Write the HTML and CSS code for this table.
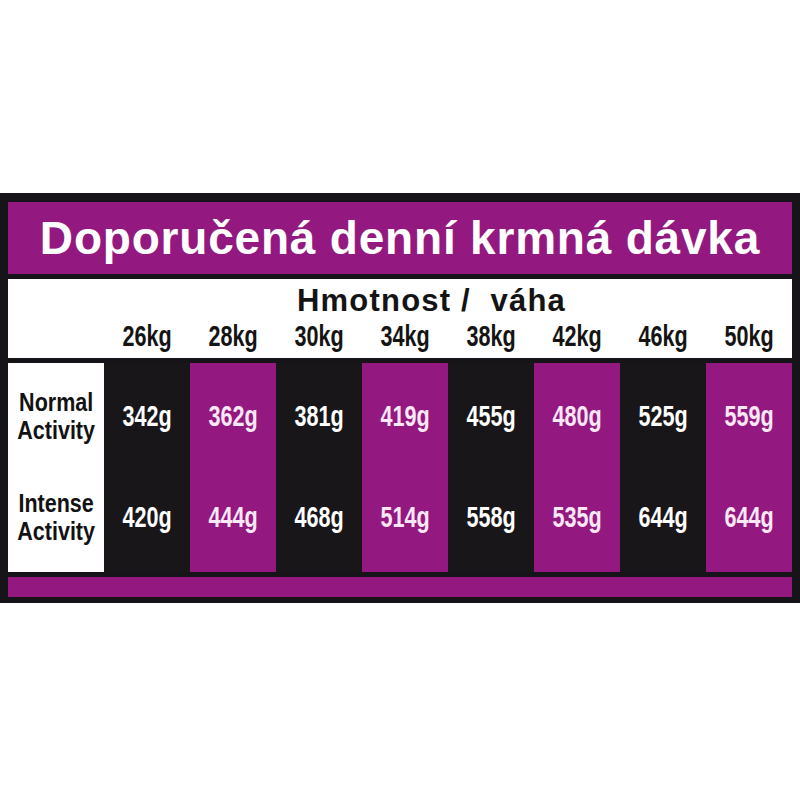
FILE: index.html
```html
<!DOCTYPE html>
<html lang="cs">
<head>
<meta charset="utf-8">
<title>Doporučená denní krmná dávka</title>
<link rel="stylesheet" href="styles.css">
</head>
<body>
<div class="frame">
  <div class="title">Doporučená denní krmná dávka</div>
  <div class="header">
    <div class="weight-title">Hmotnost /&nbsp; váha</div>
    <div class="kg-row">
      <div class="spacer"></div>
      <div class="kg"><span class="cond">26kg</span></div>
      <div class="kg"><span class="cond">28kg</span></div>
      <div class="kg"><span class="cond">30kg</span></div>
      <div class="kg"><span class="cond">34kg</span></div>
      <div class="kg"><span class="cond">38kg</span></div>
      <div class="kg"><span class="cond">42kg</span></div>
      <div class="kg"><span class="cond">46kg</span></div>
      <div class="kg"><span class="cond">50kg</span></div>
    </div>
  </div>
  <div class="data">
    <div class="col labels">
      <div class="cell"><div class="lab"><span class="lab-line">Normal</span><span class="lab-line">Activity</span></div></div>
      <div class="cell"><div class="lab"><span class="lab-line">Intense</span><span class="lab-line">Activity</span></div></div>
    </div>
    <div class="col dark">
      <div class="cell"><span class="cond">342g</span></div>
      <div class="cell"><span class="cond">420g</span></div>
    </div>
    <div class="col purple">
      <div class="cell"><span class="cond">362g</span></div>
      <div class="cell"><span class="cond">444g</span></div>
    </div>
    <div class="col dark">
      <div class="cell"><span class="cond">381g</span></div>
      <div class="cell"><span class="cond">468g</span></div>
    </div>
    <div class="col purple">
      <div class="cell"><span class="cond">419g</span></div>
      <div class="cell"><span class="cond">514g</span></div>
    </div>
    <div class="col dark">
      <div class="cell"><span class="cond">455g</span></div>
      <div class="cell"><span class="cond">558g</span></div>
    </div>
    <div class="col purple">
      <div class="cell"><span class="cond">480g</span></div>
      <div class="cell"><span class="cond">535g</span></div>
    </div>
    <div class="col dark">
      <div class="cell"><span class="cond">525g</span></div>
      <div class="cell"><span class="cond">644g</span></div>
    </div>
    <div class="col purple">
      <div class="cell"><span class="cond">559g</span></div>
      <div class="cell"><span class="cond">644g</span></div>
    </div>
  </div>
  <div class="bottom-bar"></div>
</div>
</body>
</html>
```
FILE: styles.css
```css
html, body {
  margin: 0;
  padding: 0;
  background: #ffffff;
}

body {
  font-family: "Liberation Sans", Arial, sans-serif;
}

.frame {
  margin-top: 193px;
  background: #161418;
  padding: 9px 8px 6px 8px;
  display: flex;
  flex-direction: column;
  gap: 5px;
}

.title {
  height: 72px;
  box-sizing: border-box;
  padding-top: 2px;
  background: #93187f;
  color: #ffffff;
  font-weight: bold;
  font-size: 46px;
  line-height: 69px;
  letter-spacing: 0.8px;
  text-align: center;
  white-space: nowrap;
}

.header {
  height: 79px;
  box-sizing: border-box;
  background: #ffffff;
  padding-top: 5px;
}

.weight-title {
  padding-left: 289px;
  font-weight: bold;
  font-size: 31px;
  line-height: 34px;
  letter-spacing: 1.2px;
  color: #141414;
  white-space: nowrap;
}

.kg-row {
  margin-top: 2px;
  display: flex;
}

.spacer {
  width: 96px;
  flex: none;
}

.kg {
  width: 86px;
  flex: none;
  text-align: center;
  font-size: 30px;
  line-height: 32px;
  color: #141414;
}

.cond {
  display: inline-block;
  font-weight: bold;
  transform: scaleX(0.72);
  transform-origin: center;
  white-space: nowrap;
}

.data {
  height: 209px;
  display: flex;
}

.col {
  width: 86px;
  flex: none;
  display: flex;
  flex-direction: column;
  box-sizing: border-box;
  padding: 2px 0 4px 0;
}

.col.labels {
  width: 96px;
  background: #ffffff;
  color: #121212;
}

.col.dark {
  background: #181618;
  color: #ffffff;
}

.col.purple {
  background: #93187f;
  color: #fbe8f6;
}

.cell {
  flex: 1;
  display: flex;
  align-items: center;
  justify-content: center;
  font-size: 30px;
  line-height: 32px;
}

.lab {
  display: flex;
  flex-direction: column;
  align-items: center;
  font-weight: bold;
  font-size: 25px;
  line-height: 28px;
  transform: scaleX(0.86);
  transform-origin: center;
  white-space: nowrap;
}

.lab-line {
  display: block;
}

.bottom-bar {
  height: 20px;
  background: #93187f;
}
```
